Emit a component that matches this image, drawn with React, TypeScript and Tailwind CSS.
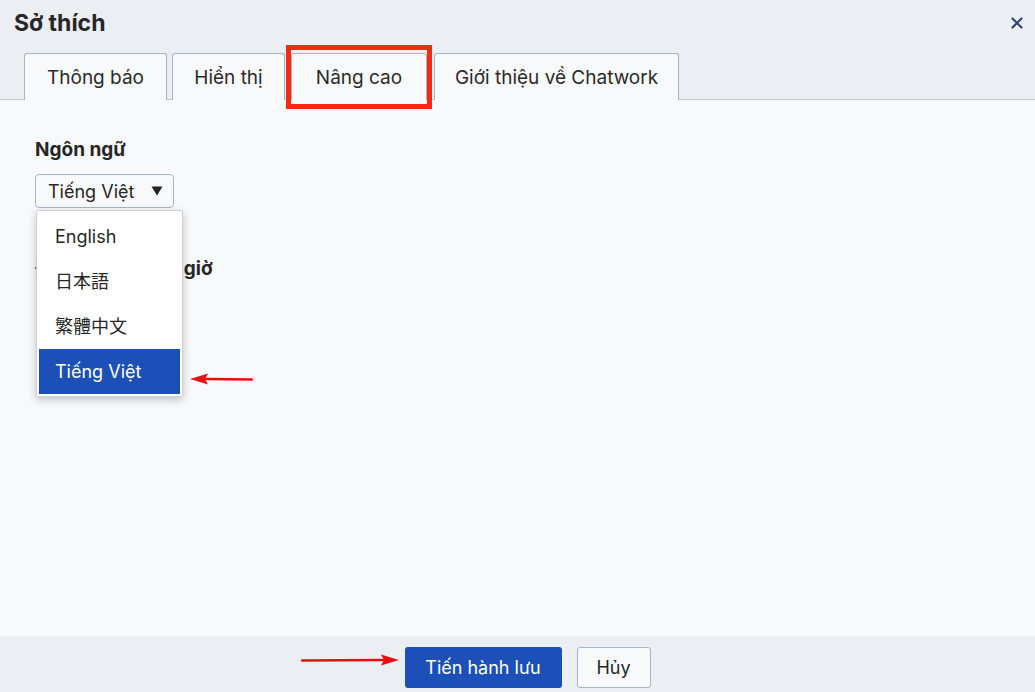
import React from 'react';

const tabs = ['Thông báo', 'Hiển thị', 'Nâng cao', 'Giới thiệu về Chatwork'];
const tabWidths = ['w-[143px]', 'w-[113px]', 'w-[136px]', 'w-[245px]'];
const languages = ['English', '日本語', '繁體中文', 'Tiếng Việt'];

function RedArrow({ length, dir }: { length: number; dir: 'left' | 'right' }) {
  return (
    <svg width={length} height="14" viewBox={`0 0 ${length} 14`}>
      {dir === 'left' ? (
        <>
          <line x1="16" y1="7" x2={length - 1} y2="7.5" stroke="#e8100e" strokeWidth="2.5" strokeLinecap="round" />
          <polygon points="0,7 18,1.5 15,7 18,12.5" fill="#e8100e" />
        </>
      ) : (
        <>
          <line x1="1" y1="7.5" x2={length - 16} y2="7" stroke="#e8100e" strokeWidth="2.5" strokeLinecap="round" />
          <polygon points={`${length},7 ${length - 18},1.5 ${length - 15},7 ${length - 18},12.5`} fill="#e8100e" />
        </>
      )}
    </svg>
  );
}

export default function App() {
  return (
    <div
      className="w-[1035px] h-[692px] flex flex-col overflow-hidden text-[#262626]"
      style={{ fontFamily: 'Inter, "Noto Sans CJK JP", "Noto Sans CJK TC", sans-serif' }}
    >
      {/* header */}
      <div className="relative z-10 bg-[#ebeef2] border-b border-[#c3c9d2]">
        <div className="flex items-center justify-between h-[45px] pl-[14px] pr-[12px] pt-[1px]">
          <h1 className="text-[23px] font-bold text-[#262626]">Sở thích</h1>
          <svg width="12" height="12" viewBox="0 0 12 12">
            <path d="M1.5 1.5 L10.5 10.5 M10.5 1.5 L1.5 10.5" stroke="#2b4674" strokeWidth="2.2" strokeLinecap="round" />
          </svg>
        </div>
        <div className="flex items-end gap-[5px] pl-[24px] pt-[8px] -mb-px">
          {tabs.map((t, i) => (
            <div
              key={t}
              className={`relative h-[47px] ${tabWidths[i]} flex items-center justify-center pt-[2px] bg-[#f8f9fb] border border-b-0 border-[#a7b5c9] rounded-t-[3px] text-[19px] text-[#2a2a2a] ${i === 2 ? 'ml-[1px]' : ''} ${i === 3 ? 'ml-[2px]' : ''}`}
            >
              {t}
              {i === 2 && (
                <div className="absolute -left-[6px] -right-[6px] -top-[9px] -bottom-[9px] border-[5px] border-[#f52a0e] pointer-events-none" />
              )}
            </div>
          ))}
        </div>
      </div>

      {/* content */}
      <div className="relative flex-1 bg-[#f8f9fb] px-[35px] pt-[39px]">
        <div className="text-[19px] font-bold leading-[22px]">Ngôn ngữ</div>
        <div className="mt-[13px] w-[139px] h-[34px] flex items-center justify-between pl-[12px] pr-[10px] border border-[#a7b5c9] rounded-[4px] bg-[#f8f9fb] text-[18px]">
          <span>Tiếng Việt</span>
          <svg width="12" height="10" viewBox="0 0 12 10">
            <polygon points="0.5,0.5 11.5,0.5 6,9.5" fill="#222" />
          </svg>
        </div>
        <div className="mt-[50px] text-[19px] font-bold leading-[22px]">Định dạng ngày giờ</div>

        <div className="absolute left-[36px] top-[110px] w-[147px] bg-white border border-[#c9d1dc] rounded-[2px] shadow-[0_3px_8px_rgba(0,0,0,0.22)] pt-[3px] pb-[2px] px-[2px]">
          {languages.map((l, i) => (
            <div
              key={l}
              className={`h-[45px] flex items-center pl-[16px] text-[18px] ${i === 3 ? 'bg-[#1c4fb8] text-white' : 'text-[#262626]'}`}
            >
              {l}
            </div>
          ))}
        </div>

        <div className="absolute left-[190px] top-[272px]">
          <RedArrow length={63} dir="left" />
        </div>
      </div>

      {/* footer */}
      <div className="relative h-[56px] bg-[#ebeef2] flex justify-center gap-[15px] pt-[11px] pl-[20px]">
        <div className="absolute left-[301px] top-[17px]">
          <RedArrow length={98} dir="right" />
        </div>
        <button className="w-[157px] h-[41px] bg-[#1c4fb8] rounded-[3px] text-white text-[18px]">Tiến hành lưu</button>
        <button className="w-[74px] h-[41px] bg-[#f8f9fb] border border-[#a7b5c9] rounded-[3px] text-[#262626] text-[18px]">Hủy</button>
      </div>
    </div>
  );
}
